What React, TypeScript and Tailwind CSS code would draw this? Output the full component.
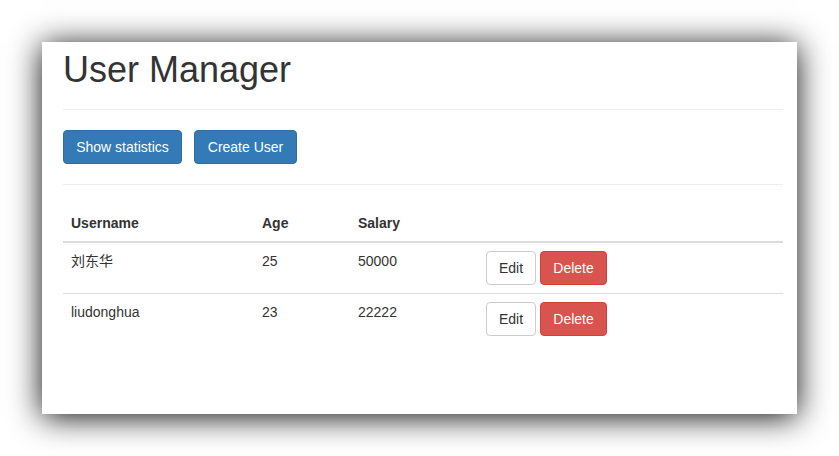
import React from 'react'

interface IUser {
  username: string
  age: number
  salary: number
}

const users: IUser[] = [
  { username: '刘东华', age: 25, salary: 50000 },
  { username: 'liudonghua', age: 23, salary: 22222 },
]

const App: React.FC = () => {
  return (
    <div className="min-h-[456px] w-[839px] bg-white pl-[42px] pt-[42px] font-['Liberation_Sans','Noto_Sans_CJK_SC',sans-serif] text-[14px] leading-[20px] text-[#333]">
      <div className="h-[372px] w-[755px] bg-white pl-[21px] pt-[8px] shadow-[0_3px_30px_rgba(0,0,0,0.95)]">
        <div className="w-[720px]">
          {/* --- Cabeçalho --- */}
          <div className="border-b border-[#eee] pb-[9px]">
            <h1 className="mb-[10px] text-[36px] leading-[39.6px] font-normal">User Manager</h1>
          </div>

          <div className="flex gap-[12px] pt-[20px] pb-[20px]">
            <button className="h-[34px] w-[119px] rounded-[4px] border border-[#2e6da4] bg-[#337ab7] text-white">
              Show statistics
            </button>
            <button className="h-[34px] w-[103px] rounded-[4px] border border-[#2e6da4] bg-[#337ab7] text-white">
              Create User
            </button>
          </div>

          <div className="border-t border-[#eee]" />

          {/* --- Tabela --- */}
          <table className="mt-[20px] w-[720px] border-collapse text-left">
            <thead>
              <tr className="border-b-2 border-[#ddd]">
                <th className="w-[191px] p-[8px] font-bold">Username</th>
                <th className="w-[96px] p-[8px] font-bold">Age</th>
                <th className="w-[128px] p-[8px] font-bold">Salary</th>
                <th className="p-[8px]"></th>
              </tr>
            </thead>
            <tbody>
              {users.map((u, i) => (
                <tr key={u.username} className={i === 0 ? 'border-b border-[#ddd]' : ''}>
                  <td className="p-[8px] align-top">{u.username}</td>
                  <td className="p-[8px] align-top">{u.age}</td>
                  <td className="p-[8px] align-top">{u.salary}</td>
                  <td className="p-[8px] align-top">
                    <div className="flex gap-[4px]">
                      <button className="h-[34px] w-[50px] rounded-[4px] border border-[#ccc] bg-white text-[#333]">
                        Edit
                      </button>
                      <button className="h-[34px] w-[67px] rounded-[4px] border border-[#d43f3a] bg-[#d9534f] text-white">
                        Delete
                      </button>
                    </div>
                  </td>
                </tr>
              ))}
            </tbody>
          </table>
        </div>
      </div>
    </div>
  )
}

export default App
